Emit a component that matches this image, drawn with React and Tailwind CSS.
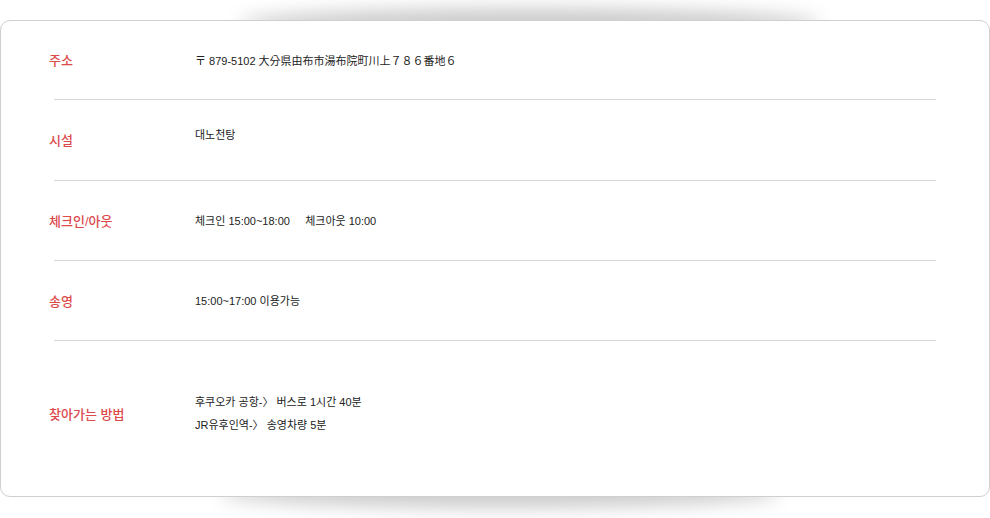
const rows = [
  { label: "주소", lines: ["〒 879-5102 大分県由布市湯布院町川上７８６番地６"], h: "h-[78px]", shift: "pt-[2px]" },
  { label: "시설", lines: ["대노천탕"], h: "h-[80px]", shift: "pt-[2px]", valueShift: "mb-[11px]" },
  { label: "체크인/아웃", lines: ["체크인 15:00~18:00\u00a0\u00a0\u00a0\u00a0\u00a0체크아웃 10:00"], h: "h-[79px]", shift: "pt-[2px]" },
  { label: "송영", lines: ["15:00~17:00 이용가능"], h: "h-[79px]", shift: "pt-[2px]" },
];

const Divider = () => <div className="mx-[53px] h-px bg-[#d6d6d6]" />;

const Row = ({ label, lines, h, shift, valueShift }) => (
  <div className={`flex items-center ${h} ${shift}`}>
    <div className="w-[194px] pl-[48px] text-[13px] font-medium text-[#dc4a4c]">{label}</div>
    <div className={`text-[11px] text-[#222] ${valueShift || ""}`}>
      {lines.map((l) => (
        <div key={l}>{l}</div>
      ))}
    </div>
  </div>
);

const App = () => {
  return (
    <div
      className="relative w-[990px] h-[518px] bg-white overflow-hidden"
      style={{ fontFamily: '"Liberation Sans", "Noto Sans CJK KR", sans-serif' }}
    >
      {/* soft shadows above and below the card */}
      <div className="absolute left-[240px] w-[580px] top-[8px] h-[30px] rounded-[50%] bg-black/20 blur-[9px]" />
      <div className="absolute left-[220px] w-[560px] top-[478px] h-[30px] rounded-[50%] bg-black/20 blur-[9px]" />

      <div className="relative z-10 mt-[20px] w-[990px] h-[477px] rounded-[10px] border border-[#cfcfcf] bg-white">
        {rows.map((r) => (
          <div key={r.label}>
            <Row {...r} />
            <Divider />
          </div>
        ))}
        <div className="flex items-center h-[154px] pb-[8px]">
          <div className="w-[194px] pl-[48px] text-[13px] font-medium text-[#dc4a4c] pt-[2px]">찾아가는 방법</div>
          <div className="text-[11px] text-[#222] leading-[23px]">
            <div>후쿠오카 공항-〉 버스로 1시간 40분</div>
            <div>JR유후인역-〉 송영차량 5분</div>
          </div>
        </div>
      </div>
    </div>
  );
};

export default App;
